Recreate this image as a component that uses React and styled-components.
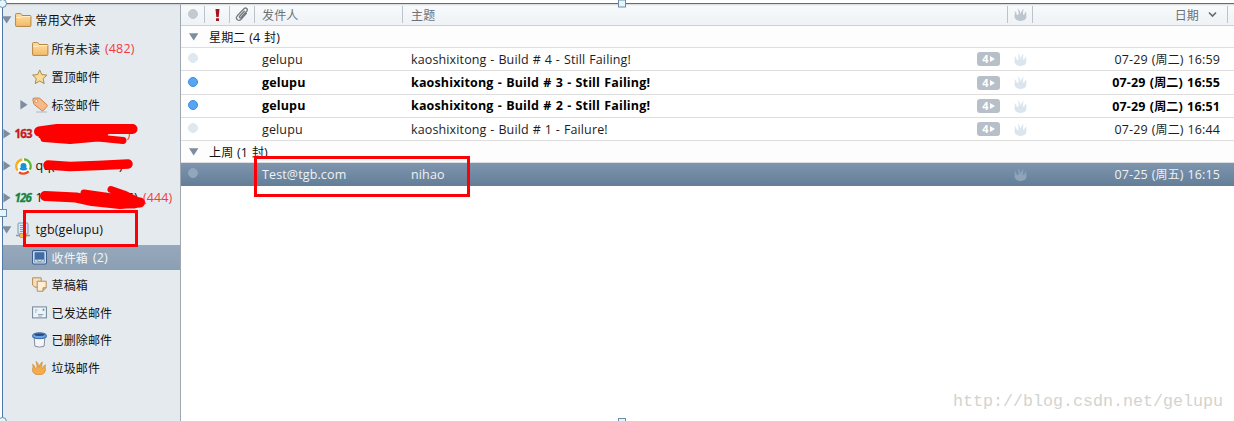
import React from "react";
import styled, { createGlobalStyle, css } from "styled-components";

const Global = createGlobalStyle`
  * { box-sizing: border-box; }
  body { margin: 0; background: #fff; overflow: hidden; }
  svg { display: block; flex: none; }
`;

const Page = styled.div`
  position: relative;
  width: 1234px;
  height: 421px;
  overflow: hidden;
  display: flex;
  padding: 3px 0 0 2px;
  font-family: "Open Sans", "Noto Sans CJK SC", sans-serif;
  font-size: 12.5px;
  line-height: 18px;
  letter-spacing: 0.13px;
  word-spacing: 0.4px;
  color: #111;
  white-space: pre;
`;

const Sidebar = styled.nav`
  width: 179px;
  border-right: 1px solid #9fa8b1;
  border-left: 1px solid #4f78a8;
  border-top: 1px solid #47719f;
  background: linear-gradient(#c9ced4, #e5eaef 2px);
  flex: none;
`;

const TreeRow = styled.div`
  height: ${(p) => p.$h}px;
  display: flex;
  align-items: center;
  ${(p) =>
    p.$selected &&
    css`
      color: #f3f6f9;
      background: linear-gradient(#96a8bb, #8b9fb4);
    `}
`;

const Arrow = styled.span`
  width: ${(p) => (p.$child ? 29 : 12)}px;
  display: flex;
  flex: none;
  padding-left: ${(p) => (p.$child ? 16 : 0)}px;
  margin-left: ${(p) => (p.$child ? 0 : -1)}px;
  padding-right: 0;
`;

const IconBox = styled.span`
  width: ${(p) => (p.$child ? 20 : 21)}px;
  margin-left: ${(p) => (p.$child ? -0.5 : 0.5)}px;
  height: 18px;
  display: flex;
  align-items: center;
  flex: none;
`;

const Cjk = styled.span`
  font-family: "Noto Sans CJK SC", sans-serif;
  font-size: 12px;
`;

const Count = styled.span`
  margin-left: ${(p) => p.$gap || 5}px;
  color: ${(p) => (p.$red ? "#f33b3b" : "inherit")};
`;

const Tail = styled.span`
  margin-left: ${(p) => p.$gap}px;
  color: ${(p) => p.$color || "inherit"};
`;

const Provider = styled.span`
  font: 700 11.5px/18px "Open Sans", sans-serif;
  font-style: ${(p) => (p.$italic ? "italic" : "normal")};
  letter-spacing: -0.8px;
  color: ${(p) => p.$color};
  -webkit-text-stroke: 0.3px ${(p) => p.$color};
`;

const Main = styled.main`
  flex: 1;
  min-width: 0;
  border-top: 1px solid #47719f;
`;

const columns = css`
  display: grid;
  grid-template-columns: 24px 25px 25px 148px 605px 25px 195px 1fr;
  align-items: center;
`;

const Header = styled.div`
  ${columns}
  height: 22px;
  border-bottom: 1px solid #cdd1d5;
  background: linear-gradient(#d3d6da, #f8fafb 2px, #eef2f6);
  color: #6c7176;
`;

const HeadCell = styled.div`
  height: 17px;
  display: flex;
  align-items: center;
  justify-content: ${(p) => p.$justify || "center"};
  padding: ${(p) => p.$pad || 0};
  border-right: ${(p) => (p.$last ? 0 : 1)}px solid #bcc3cb;
`;

const GroupRow = styled.div`
  height: 22px;
  border-bottom: 1px solid #dedede;
  background: #fdfdfd;
  display: flex;
  align-items: center;
  padding: 1px 0 0 8px;
  gap: 10px;
`;

const MailRow = styled.div`
  ${columns}
  height: ${(p) => p.$h}px;
  border-bottom: 1px solid #dedede;
  font-weight: ${(p) => (p.$unread ? 700 : 400)};
  letter-spacing: ${(p) => (p.$unread ? "0.15px" : "0.13px")};
  word-spacing: ${(p) => (p.$unread ? "0.8px" : "0.5px")};
  color: ${(p) => (p.$unread ? "#000" : "#1d1d1d")};
  ${(p) =>
    p.$selected &&
    css`
      color: #eef2f5;
      background: linear-gradient(#7d95ae, #667f98);
      border-bottom-color: #667f98;
    `}
`;

const Dot = styled.span`
  width: 10px;
  height: 10px;
  border-radius: 50%;
  margin: 0 0 2px 7px;
  background: ${(p) => p.$color};
  border: 1px solid ${(p) => p.$edge || p.$color};
`;

const Sender = styled.span`
  grid-column: 4;
  padding: ${(p) => (p.$unread ? 0 : 2)}px 0 0 7px;
`;

const Subject = styled.span`
  grid-column: 5;
  padding-left: 8px;
  display: flex;
  align-items: center;
  justify-content: space-between;
`;

const SubjectText = styled.span`
  padding-top: ${(p) => (p.$unread ? 0 : 2)}px;
`;

const Badge = styled.span`
  width: 23px;
  height: 14px;
  margin-right: 8px;
  border-radius: 3px;
  background: #b7bfc9;
  color: #fff;
  font-weight: 700;
  font-size: 11px;
  letter-spacing: 0;
  display: flex;
  align-items: center;
  justify-content: center;
  gap: 1px;
`;

const FlameCell = styled.span`
  grid-column: 6;
  display: flex;
  justify-content: center;
`;

const When = styled.span`
  grid-column: 7;
  text-align: right;
  padding-right: 8px;
`;

const Outline = styled.div`
  position: absolute;
  left: ${(p) => p.$x}px;
  top: ${(p) => p.$y}px;
  width: ${(p) => p.$w}px;
  height: ${(p) => p.$h}px;
  border: 3px solid #fb0007;
`;

const Marks = styled.svg`
  position: absolute;
  left: 0;
  top: 0;
`;

const Watermark = styled.div`
  position: absolute;
  right: 11px;
  bottom: 7px;
  font: 16.67px/24px "Liberation Mono", monospace;
  letter-spacing: 0;
  color: #d3d3ce;
`;

const Tri = ({ open }) => (
  <svg width="10" height="10" viewBox="0 0 10 10">
    <path d={open ? "M0 1.200h9.400L4.700 8.600z" : "M1.400 0v9.600L8.600 4.800z"} fill="#7d8da0" />
  </svg>
);

const Flame = ({ color, size = 13, edge }) => (
  <svg width={size} height={size} viewBox="0 0 13 13">
    <path
      d="M3.300 12.300C1 11.300.1 9.200.6 7.300.9 5.900 1.100 4.600.5 3c1.500.8 2.100 2.100 2.200 3.700.6.5 1.200.5 1.600 0C4.900 4.600 4.400 2.200 3.600.4c1.900 1.200 2.800 3.200 2.900 5.600C7.200 4 7.900 2.200 9.600.8c-.6 1.900-.5 3.700-.5 5.600.4.500.9.400 1.200 0 .3-1.300.9-2.200 2.200-2.900-.5 1.400-.2 2.500-.1 3.800.2 2.300-.7 4.200-2.800 5-1.900.8-4.400.8-6.300 0z"
      fill={color}
      stroke={edge || "none"}
      strokeWidth=".6"
    />
  </svg>
);

const Clip = () => (
  <svg width="14" height="15" viewBox="0 0 14 15" fill="none" stroke="#747a80" strokeWidth="1.300" strokeLinecap="round">
    <path d="M9.300 4.200 4.700 9.200c-.8 1 .5 2.200 1.400 1.300l5.600-6.200c1.800-2.100-.9-4.400-2.700-2.500L2.300 8.800c-2.500 2.900 1.100 6.200 3.800 3.400l5.300-5.900" />
  </svg>
);

const Folder = () => (
  <svg width="17" height="14" viewBox="0 0 17 14">
    <defs>
      <linearGradient id="fold" x2="0" y2="1">
        <stop stopColor="#ffe0a3" />
        <stop offset="1" stopColor="#f2ba68" />
      </linearGradient>
    </defs>
    <path d="M.6 12.700V1.300q0-.7.7-.7h4.300q.6 0 .9.700l.6 1.200h8q.8 0 .8.8v9.400q0 .7-.7.700H1.300q-.7 0-.7-.7z" fill="url(#fold)" stroke="#b58441" />
    <path d="M1.200 4.500h4.800l1-1h8.400" fill="none" stroke="#fff0cc" strokeWidth=".9" />
  </svg>
);

const Star = () => (
  <svg width="16" height="16" viewBox="0 0 16 16">
    <path d="M7.700.9l2.100 4.700 5.100.5-3.800 3.500 1.100 5-4.500-2.600-4.500 2.600 1.100-5L.6 6.100l5.100-.5z" fill="#fbdc97" stroke="#a98950" strokeLinejoin="round" />
  </svg>
);

const Tag = () => (
  <svg width="17" height="16" viewBox="0 0 17 16">
    <path d="M4 15h11" stroke="#c3c8cc" strokeWidth="1.500" />
    <path d="M1.700 1.200 6.600 1q.8 0 1.400.5l6.900 6.300q.7.700.1 1.500l-3.600 4.200q-.7.700-1.500.1L2.300 7.600q-.6-.5-.7-1.300L.9 2.100q-.1-.8.8-.9z" fill="#f9b987" stroke="#cf7f4a" strokeLinejoin="round" />
    <circle cx="4.300" cy="4.100" r="1.400" fill="#fff" stroke="#cf7f4a" strokeWidth=".7" />
  </svg>
);

const QQ = () => (
  <svg width="17" height="17" viewBox="0 0 17 17" fill="none">
    <circle cx="8.500" cy="8.500" r="7.900" fill="#fff" />
    <path d="M2.700 12.600C-.4 8.600 1.600 2.500 7.300 1.500" stroke="#f8ad1c" strokeWidth="2.300" />
    <path d="M9 1.400c5.500.2 8.200 5.900 5.800 10.300" stroke="#5cb531" strokeWidth="2.300" />
    <path d="M13.700 13.300c-2.500 2.900-6.800 3-9.700.9" stroke="#ea4d26" strokeWidth="2.300" />
    <circle cx="8.500" cy="8" r="3" fill="#1793d5" />
    <path d="M5 10.300q3.500 2.600 7 0" stroke="#1793d5" strokeWidth="2" />
  </svg>
);

const Server = () => (
  <svg width="16" height="16" viewBox="0 0 16 16">
    <rect x="3" y="1" width="10" height="11" rx="1" fill="#dce8f5" stroke="#7c96b5" />
    <path d="M5 3.500h6M5 5.500h6M5 7.500h6M5 9.500h6" stroke="#7ba0ca" />
    <path d="M1 13.500h14" stroke="#8695a5" strokeWidth="1.500" />
    <rect x="4.500" y="11.500" width="7" height="4" rx="1.500" fill="#f5bc55" stroke="#cc8b2c" strokeWidth=".7" />
  </svg>
);

const Inbox = () => (
  <svg width="15" height="15" viewBox="0 0 15 15">
    <rect x=".6" y=".6" width="13.800" height="13.400" rx="1.200" fill="#e6f0fa" stroke="#355a8b" strokeWidth="1.100" />
    <rect x="2.500" y="2.200" width="10" height="7.500" fill="#416ba3" />
    <path d="M2.500 9.600H5l1 1.700h3l1-1.700h2.500v2.600h-10z" fill="#c9dbee" stroke="#55789f" strokeWidth=".6" />
  </svg>
);

const Drafts = () => (
  <svg width="15" height="15" viewBox="0 0 15 15" stroke="#b98a54" strokeLinejoin="round">
    <path d="M.6.800h8.600v9.400H3L.6 8z" fill="#f4dfc0" />
    <path d="M5.200 4.200h9v6.600l-3.200 3.400H5.200z" fill="#fdeed6" />
    <path d="M14.200 10.800H11v3.400" fill="#e4bd88" />
  </svg>
);

const Sent = () => (
  <svg width="15" height="13" viewBox="0 0 15 13">
    <rect x=".6" y=".9" width="13.800" height="11" fill="#edf3f8" stroke="#70839a" />
    <path d="M3 4h2.500M3 6h1.500M6 8.500h5.500M6 10h4" stroke="#8da0b5" strokeWidth=".9" />
    <rect x="10.700" y="2.800" width="1.600" height="1.900" fill="#3da05b" />
  </svg>
);

const Bin = () => (
  <svg width="15" height="16" viewBox="0 0 15 16">
    <path d="M2.200 6h10.600l-.7 8.200q-4.600 1.900-9.200 0z" fill="#f3f5f7" stroke="#84909e" />
    <path d="M.8 2.700C3 .2 12 .2 14.200 2.700v2.500c-2.400 1.900-11 1.900-13.400 0z" fill="#6aa5e6" stroke="#2f62a8" />
    <ellipse cx="7.500" cy="2.700" rx="5" ry="1.200" fill="#284b7c" />
  </svg>
);

const tree = [
  { h: 31, open: true, icon: <Folder />, cjk: "常用文件夹" },
  { h: 28, child: true, icon: <Folder />, cjk: "所有未读", count: "(482)", red: true },
  { h: 28, child: true, icon: <Star />, cjk: "置顶邮件" },
  { h: 27, child: true, open: false, icon: <Tag />, cjk: "标签邮件" },
  { h: 32, open: false, icon: <Provider $color="#c41c20">163</Provider>, text: "1", tail: ")", tailGap: 84, tailColor: "#f33b3b" },
  { h: 32, open: false, icon: <QQ />, text: "qq(", tail: ")", tailGap: 64 },
  { h: 32, open: false, icon: <Provider $italic $color="#14843f">126</Provider>, text: "1", tail: "6)", tailGap: 84, count: "(444)", red: true },
  { h: 31, open: true, icon: <Server />, text: "tgb(gelupu)" },
  { h: 25, child: true, selected: true, icon: <Inbox />, cjk: "收件箱", count: "(2)" },
  { h: 29, child: true, icon: <Drafts />, cjk: "草稿箱" },
  { h: 27, child: true, icon: <Sent />, cjk: "已发送邮件" },
  { h: 28, child: true, icon: <Bin />, cjk: "已删除邮件" },
  { h: 27, child: true, icon: <Flame color="#f3ac49" edge="#cf832c" size={14} />, cjk: "垃圾邮件" },
];

const Mail = ({ h, unread, selected, sender, subject, badge, day, week, time }) => (
  <MailRow $h={h} $unread={unread} $selected={selected}>
    <Dot $color={unread ? "#58a6f1" : selected ? "#92a7bc" : "#dfe7ef"} $edge={unread ? "#3b8fe0" : undefined} />
    <Sender $unread={unread}>{sender}</Sender>
    <Subject>
      <SubjectText $unread={unread}>{subject}</SubjectText>
      {badge && (
        <Badge>
          {badge}
          <svg width="5" height="6" viewBox="0 0 5 6"><path d="M0 0v6l5-3z" fill="#fff" /></svg>
        </Badge>
      )}
    </Subject>
    <FlameCell><Flame color={selected ? "#8fa4b9" : "#dbe5ee"} /></FlameCell>
    <When>{day} (<Cjk>{week}</Cjk>) {time}</When>
  </MailRow>
);

const Handle = ({ x, y }) => <rect x={x} y={y} width="7" height="7" fill="#e3f6fb" stroke="#6e8ca5" />;

export default function App() {
  return (
    <Page>
      <Global />
      <Sidebar>
        {tree.map((r, i) => (
          <TreeRow key={i} $h={r.h} $selected={r.selected}>
            <Arrow $child={r.child}>{r.open !== undefined && <Tri open={r.open} />}</Arrow>
            <IconBox $child={r.child}>{r.icon}</IconBox>
            {r.cjk && <Cjk>{r.cjk}</Cjk>}
            {r.text}
            {r.tail && <Tail $gap={r.tailGap} $color={r.tailColor}>{r.tail}</Tail>}
            {r.count && <Count $red={r.red}>{r.count}</Count>}
          </TreeRow>
        ))}
      </Sidebar>
      <Main>
        <Header>
          <HeadCell $justify="flex-start"><Dot $color="#c2c9d1" /></HeadCell>
          <HeadCell>
            <svg width="5" height="12" viewBox="0 0 5 12"><path d="M.5 0h4l-.8 8H1.300zM1 9.300h3V12H1z" fill="#a5141c" /></svg>
          </HeadCell>
          <HeadCell><Clip /></HeadCell>
          <HeadCell $justify="flex-start" $pad="0 0 0 7px"><Cjk>发件人</Cjk></HeadCell>
          <HeadCell $justify="flex-start" $pad="0 0 0 8px"><Cjk>主题</Cjk></HeadCell>
          <HeadCell><Flame color="#bdc6cf" /></HeadCell>
          <HeadCell $justify="flex-end" $pad="0 10px 0 0">
            <Cjk>日期</Cjk>
            <svg width="18" height="8" viewBox="0 0 18 8"><path d="M10 1.500l3.500 3.500L17 1.500" fill="none" stroke="#626970" strokeWidth="1.600" /></svg>
          </HeadCell>
          <HeadCell $last />
        </Header>
        <GroupRow><Tri open /><span><Cjk>星期二</Cjk> (4 <Cjk>封</Cjk>)</span></GroupRow>
        <Mail h={23} sender="gelupu" subject="kaoshixitong - Build # 4 - Still Failing!" badge="4" day="07-29" week="周二" time="16:59" />
        <Mail h={24} unread sender="gelupu" subject="kaoshixitong - Build # 3 - Still Failing!" badge="4" day="07-29" week="周二" time="16:55" />
        <Mail h={23} unread sender="gelupu" subject="kaoshixitong - Build # 2 - Still Failing!" badge="4" day="07-29" week="周二" time="16:51" />
        <Mail h={23} sender="gelupu" subject="kaoshixitong - Build # 1 - Failure!" badge="4" day="07-29" week="周二" time="16:44" />
        <GroupRow><Tri open /><span><Cjk>上周</Cjk> (1 <Cjk>封</Cjk>)</span></GroupRow>
        <Mail h={23} selected sender="Test@tgb.com" subject="nihao" day="07-25" week="周五" time="16:15" />
      </Main>
      <Marks width="1234" height="421">
        <g fill="none" stroke="#fe0000" strokeLinecap="round" strokeLinejoin="round">
          <path d="M39 131.500L57 129H132.500" strokeWidth="10" />
          <path d="M44 136L60 133.500 104 133" strokeWidth="9" />
          <path d="M44 138.500L70 140.500 98 138 123 140.500" strokeWidth="7" />
          <path d="M48 165L70 166.500 98 165.500 128 164" strokeWidth="9.500" />
          <path d="M45 196L76 197.500 92 201 120 204 140 202.500" strokeWidth="10" />
          <path d="M84 193L112 197 140 202M111 189.500L124 194 138 201M104 203L134 205" strokeWidth="7" />
        </g>
        <g>
          <Handle x={618.500} y={0} />
          <Handle x={-0.500} y={209.500} />
          <Handle x={618.500} y={418.500} />
          <circle cx="2.500" cy="3.500" r="4" fill="#e3f6fb" stroke="#6e8ca5" />
          <circle cx="2.500" cy="421.500" r="4" fill="#e3f6fb" stroke="#6e8ca5" />
        </g>
      </Marks>
      <Outline $x={23} $y={210} $w={115} $h={37} />
      <Outline $x={254} $y={156} $w={216} $h={41} />
      <Watermark>http://blog.csdn.net/gelupu</Watermark>
    </Page>
  );
}
